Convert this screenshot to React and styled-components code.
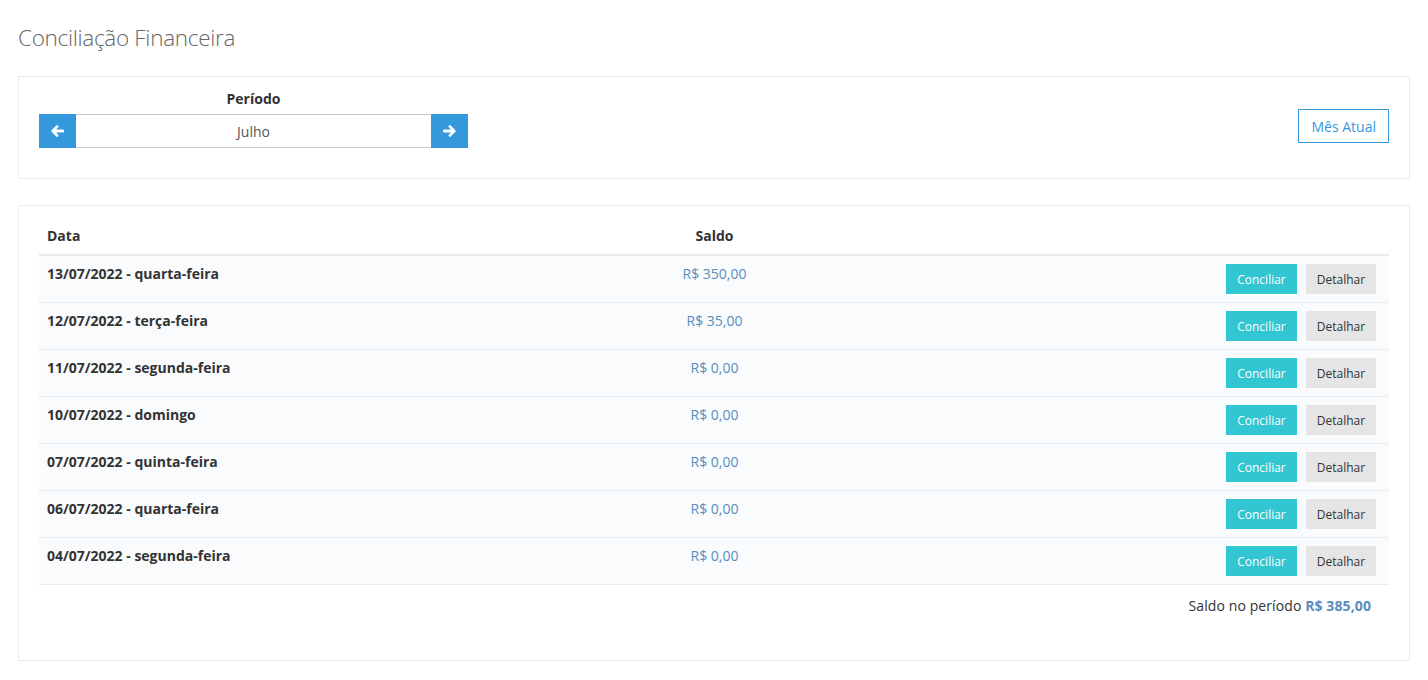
import React from "react";
import styled, { createGlobalStyle } from "styled-components";

const Global = createGlobalStyle`
  html, body { margin: 0; padding: 0; background: #fff; }
  body { font-family: "Open Sans", "Liberation Sans", sans-serif; font-size: 14px; color: #333; }
  * { box-sizing: border-box; }
`;

const Page = styled.div`
  padding: 22px 18px 20px 18px;
`;

const Title = styled.h1`
  margin: 0 0 22px 0;
  font-weight: 300;
  font-size: 22.5px;
  line-height: 32px;
  color: #666;
  letter-spacing: -0.3px;
`;

const Card = styled.div`
  border: 1px solid #e7ecf1;
  background: #fff;
  padding: ${(p) => p.$pad};
  margin-bottom: ${(p) => p.$mb || "0"};
`;

const FilterRow = styled.div`
  display: flex;
  justify-content: space-between;
  align-items: flex-start;
`;

const PeriodBox = styled.div`
  width: 429px;
  display: flex;
  flex-direction: column;
  align-items: stretch;
`;

const Label = styled.div`
  text-align: center;
  font-weight: 700;
  font-size: 14px;
  line-height: 20px;
  margin-bottom: 5px;
  color: #333;
`;

const InputGroup = styled.div`
  display: flex;
  height: 34px;
`;

const ArrowBtn = styled.button`
  width: 37px;
  height: 34px;
  border: none;
  background: #3598dc;
  color: #fff;
  display: flex;
  align-items: center;
  justify-content: center;
  padding: 0;
  cursor: pointer;
`;

const PeriodInput = styled.div`
  flex: 1;
  border: 1px solid #c2cad8;
  border-left: none;
  border-right: none;
  display: flex;
  align-items: center;
  justify-content: center;
  color: #555;
  font-size: 14px;
`;

const OutlineBtn = styled.button`
  margin-top: 20px;
  height: 34px;
  padding: 0 12px;
  border: 1px solid #3598dc;
  background: #fff;
  color: #3598dc;
  font-family: inherit;
  font-size: 14px;
`;

const Table = styled.div`
  display: flex;
  flex-direction: column;
`;

const Row = styled.div`
  display: grid;
  grid-template-columns: 445px 445px 1fr;
  align-items: start;
  padding: 8px 13px 8px 8px;
  background: ${(p) => (p.$head ? "#fff" : "#f9fbfd")};
  border-bottom: ${(p) => (p.$head ? "2px" : "1px")} solid #e7ecf1;
`;

const DateCell = styled.div`
  font-weight: 700;
  line-height: 20px;
  color: #333;
`;

const SaldoCell = styled.div`
  text-align: center;
  line-height: 20px;
  font-weight: ${(p) => (p.$head ? 700 : 400)};
  color: ${(p) => (p.$head ? "#333" : "#578ebe")};
`;

const Actions = styled.div`
  display: flex;
  justify-content: flex-end;
  gap: 9px;
`;

const SmallBtn = styled.button`
  height: 30px;
  width: ${(p) => p.$w}px;
  border: none;
  padding: 0;
  font-family: inherit;
  font-size: 12px;
  background: ${(p) => (p.$primary ? "#32c5d2" : "#e5e5e5")};
  color: ${(p) => (p.$primary ? "#fff" : "#333")};
`;

const Footer = styled.div`
  text-align: right;
  padding: 11px 18px 0 0;
  line-height: 20px;
  color: #333;
  letter-spacing: 0.1px;
`;

const Total = styled.span`
  font-weight: 700;
  color: #578ebe;
`;

const Arrow = ({ dir }) => (
  <svg
    width="13"
    height="12"
    viewBox="0 0 13 12"
    style={{ transform: dir === "right" ? "scaleX(-1)" : undefined }}
  >
    <path
      d="M6 1.6 L1.8 6 L6 10.4 M2.2 6 H12"
      fill="none"
      stroke="#fff"
      strokeWidth="2.8"
      strokeLinecap="round"
      strokeLinejoin="round"
    />
  </svg>
);

const rows = [
  ["13/07/2022 - quarta-feira", "R$ 350,00"],
  ["12/07/2022 - terça-feira", "R$ 35,00"],
  ["11/07/2022 - segunda-feira", "R$ 0,00"],
  ["10/07/2022 - domingo", "R$ 0,00"],
  ["07/07/2022 - quinta-feira", "R$ 0,00"],
  ["06/07/2022 - quarta-feira", "R$ 0,00"],
  ["04/07/2022 - segunda-feira", "R$ 0,00"],
];

export default function App() {
  return (
    <Page>
      <Global />
      <Title>Conciliação Financeira</Title>
      <Card $pad="12px 20px 30px 20px" $mb="26px">
        <FilterRow>
          <PeriodBox>
            <Label>Período</Label>
            <InputGroup>
              <ArrowBtn aria-label="anterior">
                <Arrow dir="left" />
              </ArrowBtn>
              <PeriodInput>Julho</PeriodInput>
              <ArrowBtn aria-label="próximo">
                <Arrow dir="right" />
              </ArrowBtn>
            </InputGroup>
          </PeriodBox>
          <OutlineBtn>Mês Atual</OutlineBtn>
        </FilterRow>
      </Card>
      <Card $pad="12px 20px 44px 20px">
        <Table>
          <Row $head>
            <DateCell>Data</DateCell>
            <SaldoCell $head>Saldo</SaldoCell>
            <div />
          </Row>
          {rows.map(([d, v]) => (
            <Row key={d}>
              <DateCell>{d}</DateCell>
              <SaldoCell>{v}</SaldoCell>
              <Actions>
                <SmallBtn $primary $w={71}>Conciliar</SmallBtn>
                <SmallBtn $w={70}>Detalhar</SmallBtn>
              </Actions>
            </Row>
          ))}
        </Table>
        <Footer>
          Saldo no período <Total>R$ 385,00</Total>
        </Footer>
      </Card>
    </Page>
  );
}
